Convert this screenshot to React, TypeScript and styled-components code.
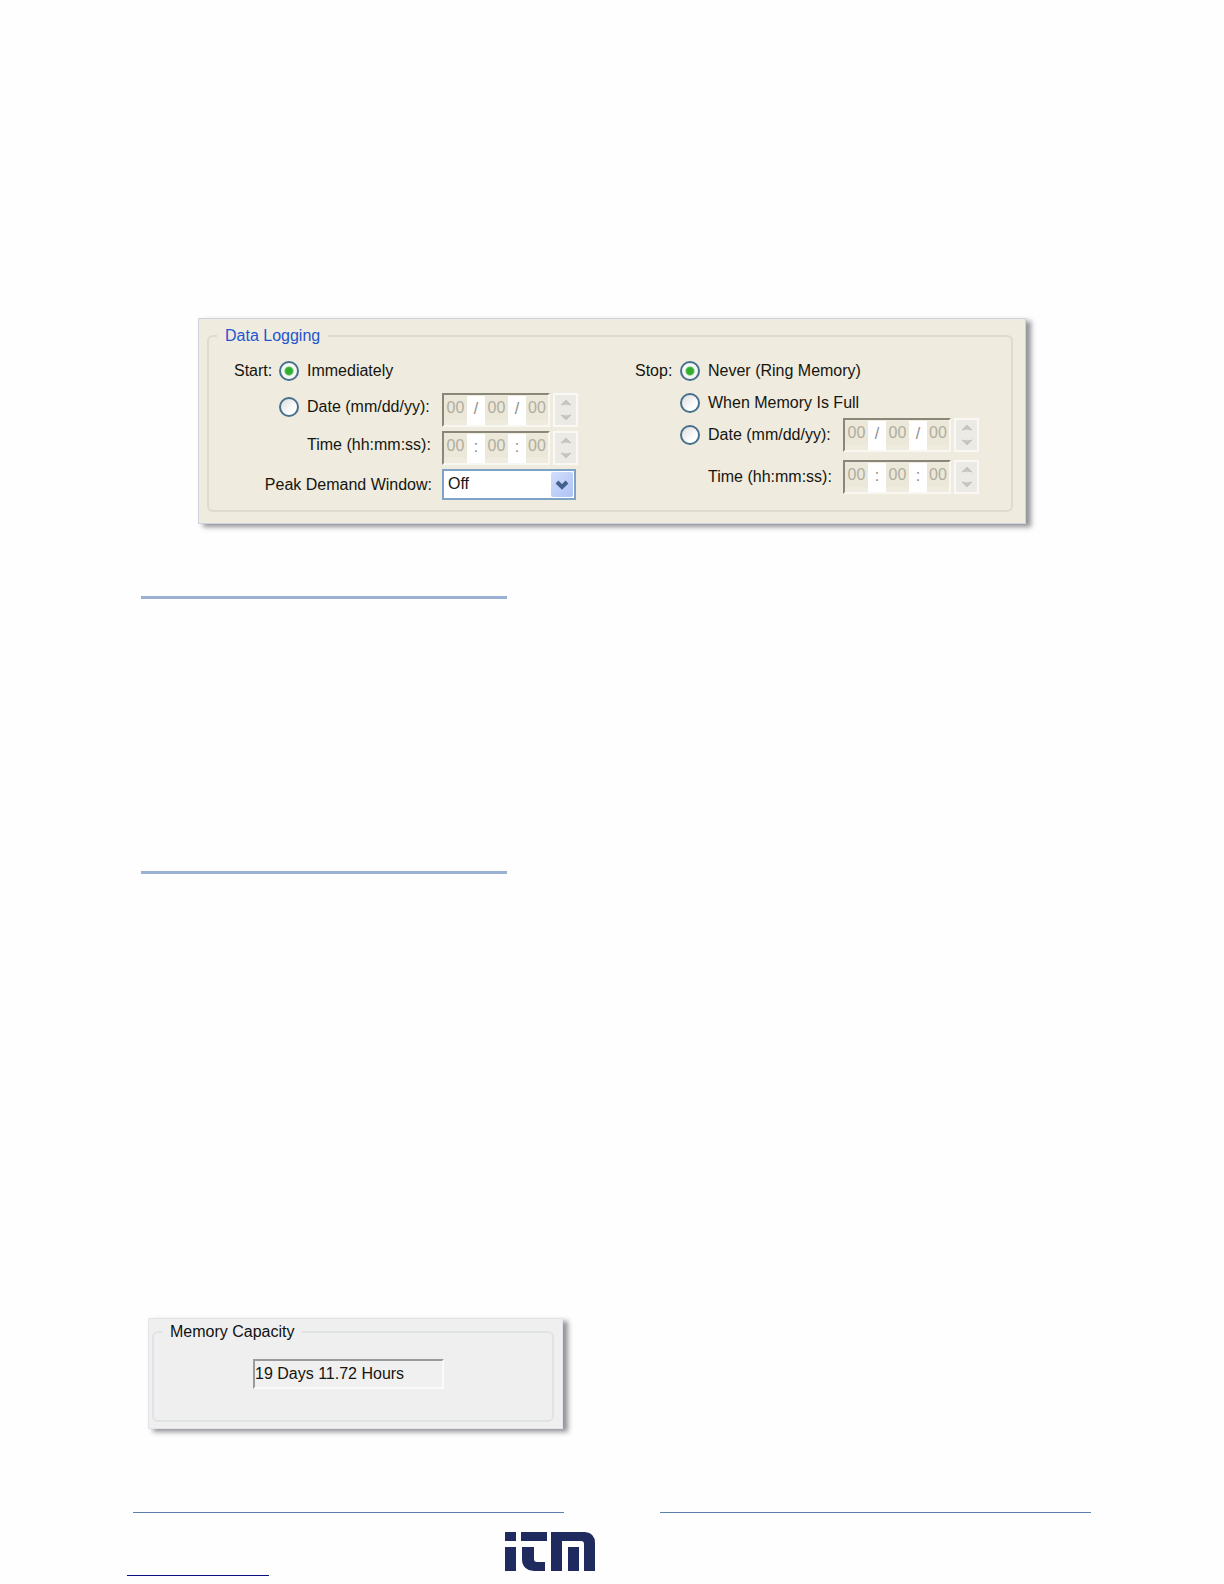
import React from "react";
import styled, { createGlobalStyle } from "styled-components";

const GlobalStyle = createGlobalStyle`
  *, *::before, *::after { box-sizing: border-box; }
  body { margin: 0; background: #fefefe; }
`;

const Page = styled.div`
  min-height: 100vh;
  display: flex;
  flex-direction: column;
  padding: 318px 24px 8px;
  background: #fefefe;
  color: #16150f;
  font: 16px/20px "Liberation Sans", Arial, sans-serif;
`;

const Main = styled.main`
  width: 100%;
  max-width: 958px;
  margin: 0 auto;
  flex: 1;
`;

const Panel = styled.section<{ $tone: "beige" | "gray" }>`
  width: 100%;
  background: ${(p) => (p.$tone === "beige" ? "#efebde" : "#efefef")};
  border: 1px solid ${(p) => (p.$tone === "beige" ? "#cdd3de" : "#e2e4ea")};
  box-shadow: 5px 3px 5px rgba(60, 60, 70, 0.55);
`;

const LoggingPanel = styled(Panel)`
  max-width: 828px;
  margin: 0 auto;
  padding: 7px 12px 11px 8px;
`;

const MemoryPanel = styled(Panel)`
  max-width: 415px;
  margin-left: 15px;
  padding: 3px 8px 6px 3px;
`;

const Group = styled.fieldset<{ $line: string }>`
  margin: 0;
  padding: 0;
  min-width: 0;
  border: 2px solid ${(p) => p.$line};
  border-radius: 6px;
`;

const Legend = styled.legend<{ $color: string }>`
  margin-left: 8px;
  padding: 0 8px;
  color: ${(p) => p.$color};
`;

const Columns = styled.div`
  display: grid;
  grid-template-columns: 1fr 1fr;
  padding: 7px 0 9px;
`;

const Options = styled.div<{ $rows: string; $gap: number }>`
  display: grid;
  grid-template-columns: 45px 28px 135px auto;
  grid-template-rows: ${(p) => p.$rows};
  row-gap: ${(p) => p.$gap}px;
  align-items: center;
  align-content: start;
  justify-content: start;
  padding-left: 25px;
`;

const Caption = styled.span`
  grid-column: 1;
  white-space: nowrap;
`;

const Label = styled.label<{ $wide?: boolean; $raised?: boolean }>`
  grid-column: ${(p) => (p.$wide ? "3 / 5" : "3")};
  margin-bottom: ${(p) => (p.$raised ? 6 : 0)}px;
  white-space: nowrap;
`;

const WindowLabel = styled.label`
  grid-column: 1 / 4;
  padding-right: 10px;
  text-align: right;
  white-space: nowrap;
`;

const Radio = styled.input<{ $raised?: boolean }>`
  grid-column: 2;
  appearance: none;
  width: 20px;
  height: 20px;
  margin: 0 0 ${(p) => (p.$raised ? 6 : 0)}px;
  border: 2px solid #47708f;
  border-radius: 50%;
  background: linear-gradient(135deg, #dcdcdc, #ffffff 70%);

  &:checked {
    background: radial-gradient(circle, #2fae2f 0 3px, #58c058 4px, #f6f6f4 5px);
  }
`;

const FieldGroup = styled.div`
  grid-column: 4;
  display: flex;
  gap: 3px;
`;

const Masked = styled.div`
  display: grid;
  grid-template-columns: 23px 18px 23px 18px 22px;
  height: 34px;
  padding-top: 1px;
  border: 2px solid #f8f7f1;
  border-top: 2px solid #8a8678;
  border-left: 2px solid #8a8678;
`;

const Segment = styled.input`
  width: 100%;
  min-width: 0;
  height: 24px;
  margin: 0;
  padding: 0;
  border: 0;
  background: #ece8d9;
  color: #b0ad9f;
  font: inherit;
  text-align: center;
`;

const Separator = styled.span`
  background: #ffffff;
  color: #8d8d8d;
  line-height: 26px;
  text-align: center;
`;

const Spinner = styled.div`
  display: grid;
  width: 25px;
  height: 34px;
  border: 2px solid #f9f8f4;
  background: #eceae4;
`;

const SpinButton = styled.button`
  display: grid;
  place-items: center;
  padding: 0;
  border: 0;
  background: transparent;
  color: #c6c5c2;
`;

const SelectBox = styled.div`
  grid-column: 4;
  position: relative;
  width: 134px;
  height: 31px;
`;

const Select = styled.select`
  appearance: none;
  width: 100%;
  height: 100%;
  padding: 0 30px 2px 4px;
  border: 2px solid #7fa3c6;
  border-radius: 0;
  background: #ffffff;
  color: inherit;
  font: inherit;
`;

const Arrow = styled.span`
  position: absolute;
  top: 3px;
  right: 3px;
  bottom: 3px;
  width: 22px;
  display: grid;
  place-items: center;
  border-radius: 2px;
  background: linear-gradient(135deg, #d2defc, #adc3f5);
  pointer-events: none;
`;

const Rule = styled.hr<{ $before: number }>`
  width: 366px;
  max-width: 100%;
  height: 3px;
  margin: ${(p) => p.$before}px 0 0 8px;
  border: 0;
  background: #9bb1d4;
`;

const Capacity = styled.div`
  padding: 17px 0 31px 99px;
`;

const CapacityField = styled.input`
  display: block;
  width: 191px;
  height: 30px;
  margin: 0;
  padding: 0;
  border: 2px solid #fafafa;
  border-top-color: #9a9a9a;
  border-left-color: #9a9a9a;
  background: #f0f0f0;
  color: inherit;
  font: inherit;
`;

const Spacer = styled.div<{ $size: number }>`
  height: ${(p) => p.$size}px;
`;

const Footer = styled.footer`
  width: 100%;
  max-width: 970px;
  margin: 0 auto;
`;

const FooterLines = styled.div`
  display: grid;
  grid-template-columns: 1fr 1fr;
  gap: 96px;
  padding: 0 6px;
`;

const FooterLine = styled.hr`
  width: 100%;
  height: 1px;
  margin: 0;
  border: 0;
  background: #5b7fae;
`;

const Brand = styled.div`
  display: flex;
  justify-content: center;
  padding: 19px 124px 0 0;
`;

const LinkLine = styled.hr`
  width: 142px;
  height: 1px;
  margin: 4px 0 0;
  border: 0;
  background: #0a1080;
`;

function Chevron({ up = false }: { up?: boolean }) {
  return (
    <svg width="12" height="7" viewBox="0 0 12 7" aria-hidden="true">
      <path d={up ? "M1 6 6 1l5 5-5-1z" : "M1 1l5 5 5-5-5 1z"} fill="currentColor" stroke="currentColor" />
    </svg>
  );
}

function MaskedField({ id, name, mark }: { id: string; name: string; mark: string }) {
  return (
    <FieldGroup>
      <Masked>
        <Segment id={id} defaultValue="00" disabled />
        <Separator>{mark}</Separator>
        <Segment aria-label={`${name}, second part`} defaultValue="00" disabled />
        <Separator>{mark}</Separator>
        <Segment aria-label={`${name}, third part`} defaultValue="00" disabled />
      </Masked>
      <Spinner>
        <SpinButton type="button" aria-label={`Increase ${name}`} disabled>
          <Chevron up />
        </SpinButton>
        <SpinButton type="button" aria-label={`Decrease ${name}`} disabled>
          <Chevron />
        </SpinButton>
      </Spinner>
    </FieldGroup>
  );
}

function StartOptions() {
  return (
    <Options $rows="36px 34px 34px 31px" $gap={4}>
      <Caption>Start:</Caption>
      <Radio type="radio" name="start" id="start-now" defaultChecked />
      <Label htmlFor="start-now" $wide>Immediately</Label>
      <Radio type="radio" name="start" id="start-on" $raised />
      <Label htmlFor="start-on" $raised>Date (mm/dd/yy):</Label>
      <MaskedField id="start-date" name="start date" mark="/" />
      <Label htmlFor="start-time" $raised>Time (hh:mm:ss):</Label>
      <MaskedField id="start-time" name="start time" mark=":" />
      <WindowLabel htmlFor="peak-window">Peak Demand Window:</WindowLabel>
      <SelectBox>
        <Select id="peak-window" defaultValue="Off">
          <option>Off</option>
        </Select>
        <Arrow>
          <svg width="14" height="10" viewBox="0 0 14 10" aria-hidden="true">
            <path d="M2 2l5 5 5-5" fill="none" stroke="#44608f" strokeWidth="4" />
          </svg>
        </Arrow>
      </SelectBox>
    </Options>
  );
}

function StopOptions() {
  return (
    <Options $rows="36px 28px 36px 48px" $gap={0}>
      <Caption>Stop:</Caption>
      <Radio type="radio" name="stop" id="stop-never" defaultChecked />
      <Label htmlFor="stop-never" $wide>Never (Ring Memory)</Label>
      <Radio type="radio" name="stop" id="stop-full" />
      <Label htmlFor="stop-full" $wide>When Memory Is Full</Label>
      <Radio type="radio" name="stop" id="stop-on" />
      <Label htmlFor="stop-on">Date (mm/dd/yy):</Label>
      <MaskedField id="stop-date" name="stop date" mark="/" />
      <Label htmlFor="stop-time">Time (hh:mm:ss):</Label>
      <MaskedField id="stop-time" name="stop time" mark=":" />
    </Options>
  );
}

function Logo() {
  return (
    <svg width="90" height="39" viewBox="0 0 90 39" fill="#1f2b5e" role="img" aria-label="ITM">
      <rect width="11" height="9" />
      <rect y="15" width="11" height="24" />
      <rect x="16" width="26" height="9" />
      <path d="M17 15h12v12q0 3 3 3h8v9H29Q17 38 17 27z" />
      <path d="M46 0h34q10 1 10 11v28H79V12q0-3-3-3H57v30H46z" />
      <rect x="63" y="15" width="11" height="24" />
    </svg>
  );
}

export default function App() {
  return (
    <>
      <GlobalStyle />
      <Page>
        <Main>
          <LoggingPanel $tone="beige">
            <Group $line="#dfdbcc">
              <Legend $color="#2355cf">Data Logging</Legend>
              <Columns>
                <StartOptions />
                <StopOptions />
              </Columns>
            </Group>
          </LoggingPanel>
          <Rule $before={72} />
          <Rule $before={272} />
          <Spacer $size={444} />
          <MemoryPanel $tone="gray">
            <Group $line="#e0e3e3">
              <Legend $color="#111111">
                <label htmlFor="capacity">Memory Capacity</label>
              </Legend>
              <Capacity>
                <CapacityField id="capacity" readOnly defaultValue="19 Days 11.72 Hours" />
              </Capacity>
            </Group>
          </MemoryPanel>
        </Main>
        <Footer>
          <FooterLines>
            <FooterLine />
            <FooterLine />
          </FooterLines>
          <Brand>
            <Logo />
          </Brand>
          <LinkLine />
        </Footer>
      </Page>
    </>
  );
}
